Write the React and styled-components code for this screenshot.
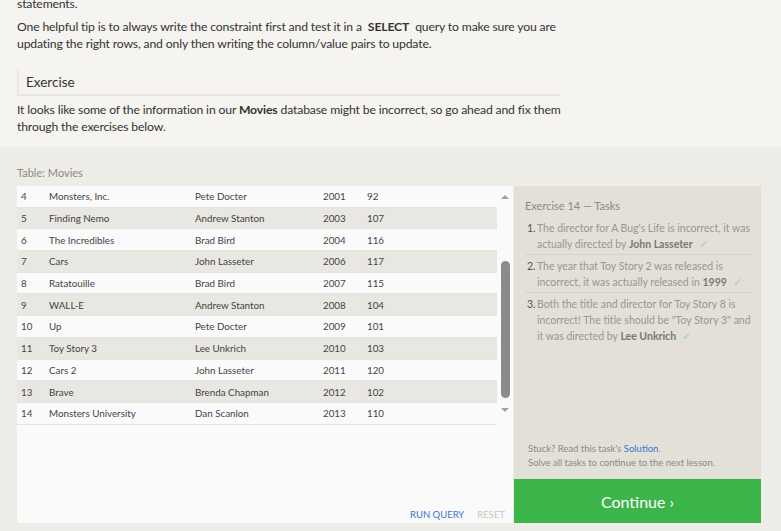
import React from 'react'
import styled, { createGlobalStyle } from 'styled-components'

const movies = [
  [4, 'Monsters, Inc.', 'Pete Docter', 2001, 92],
  [5, 'Finding Nemo', 'Andrew Stanton', 2003, 107],
  [6, 'The Incredibles', 'Brad Bird', 2004, 116],
  [7, 'Cars', 'John Lasseter', 2006, 117],
  [8, 'Ratatouille', 'Brad Bird', 2007, 115],
  [9, 'WALL-E', 'Andrew Stanton', 2008, 104],
  [10, 'Up', 'Pete Docter', 2009, 101],
  [11, 'Toy Story 3', 'Lee Unkrich', 2010, 103],
  [12, 'Cars 2', 'John Lasseter', 2011, 120],
  [13, 'Brave', 'Brenda Chapman', 2012, 102],
  [14, 'Monsters University', 'Dan Scanlon', 2013, 110],
]

const GlobalStyle = createGlobalStyle`
  html, body {
    margin: 0;
    padding: 0;
    background: #eeece6;
    font-family: Lato, "Open Sans", sans-serif;
    color: #333;
  }
`

const Page = styled.div`
  width: 781px;
  height: 531px;
  overflow: hidden;
`

const Lesson = styled.section`
  height: 147px;
  background: #f5f4f0;
  padding: 0 17px;
  box-sizing: border-box;
  overflow: hidden;
  font-size: 12.2px;
  letter-spacing: -0.15px;
  line-height: 17px;
`

const Para = styled.p`
  margin: 0 0 6px;
  &:first-child {
    margin-top: -5px;
  }
`

const Keyword = styled.b`
  padding: 0 3px;
`

const SectionHead = styled.h3`
  margin: 18px 0 5px;
  width: 543px;
  height: 26px;
  box-sizing: border-box;
  border-left: 2px solid #e9e7e0;
  border-bottom: 2px solid #e9e7e0;
  padding: 2px 0 0 7px;
  font-size: 13.5px;
  font-weight: normal;
  letter-spacing: 0;
  line-height: 20px;
  color: #333;
`

const Workspace = styled.section`
  padding: 18px 20px 0 17px;
`

const TableLabel = styled.div`
  font-size: 11px;
  color: #8c8a84;
  height: 21px;
  line-height: 16px;
`

const Body = styled.div`
  display: flex;
  height: 337px;
`

const Editor = styled.div`
  width: 496px;
  background: #fafafa;
  display: flex;
  flex-direction: column;
`

const Results = styled.div`
  display: flex;
  height: 238px;
`

const Rows = styled.div`
  flex: 1;
`

const Row = styled.div`
  display: grid;
  grid-template-columns: 28px 146px 128px 44px 1fr;
  height: 21.7px;
  align-items: center;
  padding-left: 4px;
  box-sizing: border-box;
  font-size: 9.8px;
  color: #444;
  background: ${p => (p.$shade ? '#e8e7e1' : '#fafafa')};
  border-bottom: 1px solid #e4e3dd;
`

const Scrollbar = styled.div`
  width: 16px;
  display: flex;
  flex-direction: column;
  align-items: center;
`

const Arrow = styled.div`
  width: 0;
  height: 0;
  border-left: 4px solid transparent;
  border-right: 4px solid transparent;
  ${p => (p.$down ? 'border-top: 4px solid #a3a3a3;' : 'border-bottom: 4px solid #a3a3a3;')}
  margin: ${p => (p.$down ? '0' : '9px 0 0')};
`

const Track = styled.div`
  flex: 1;
  width: 100%;
  display: flex;
  justify-content: center;
  padding: 62px 0 10px;
  box-sizing: border-box;
`

const Thumb = styled.div`
  width: 9px;
  height: 137px;
  border-radius: 5px;
  background: #8b8b8b;
`

const DownWrap = styled.div`
  height: 22px;
`

const Actions = styled.div`
  margin-top: auto;
  display: flex;
  justify-content: flex-end;
  gap: 13px;
  padding: 0 8px 3px 0;
  font-size: 9.5px;
`

const Action = styled.span`
  color: ${p => (p.$muted ? '#c9c8c4' : '#3d72d1')};
`

const Side = styled.aside`
  width: 247px;
  margin-left: 1px;
  display: flex;
  flex-direction: column;
`

const Tasks = styled.div`
  flex: 1;
  background: #e2e0d7;
  padding: 13px 9px 0 11px;
  display: flex;
  flex-direction: column;
`

const TasksTitle = styled.div`
  font-size: 11px;
  color: #8c8a84;
  margin-bottom: 5px;
`

const TaskList = styled.ol`
  margin: 0;
  padding: 0;
  list-style: none;
`

const Task = styled.li`
  display: flex;
  font-size: 10.5px;
  line-height: 16px;
  color: #999791;
  padding: 3px 0 2px 2px;
  border-bottom: ${p => (p.$last ? 'none' : '1px solid #d5d3ca')};
`

const Num = styled.span`
  color: #55534e;
  width: 10px;
  flex-shrink: 0;
`

const Strong = styled.b`
  color: #7a7873;
`

const Check = styled.span`
  color: #9fd49f;
  margin-left: 6px;
`

const Help = styled.div`
  margin-top: auto;
  font-size: 9.5px;
  line-height: 14px;
  color: #8c8a84;
  padding: 0 0 9px 3px;
`

const Link = styled.span`
  color: #3d72d1;
`

const Continue = styled.button`
  height: 44px;
  border: none;
  background: #3bb54a;
  color: #fff;
  font-family: inherit;
  font-size: 16px;
  padding: 0;
`

export default function App() {
  return (
    <Page>
      <GlobalStyle />
      <Lesson>
        <Para>statements.</Para>
        <Para>
          One helpful tip is to always write the constraint first and test it in a <Keyword>SELECT</Keyword> query to make
          sure you are
          <br />
          updating the right rows, and only then writing the column/value pairs to update.
        </Para>
        <SectionHead>Exercise</SectionHead>
        <Para>
          It looks like some of the information in our <b>Movies</b> database might be incorrect, so go ahead and fix them
          <br />
          through the exercises below.
        </Para>
      </Lesson>
      <Workspace>
        <TableLabel>Table: Movies</TableLabel>
        <Body>
          <Editor>
            <Results>
              <Rows>
                {movies.map((m, i) => (
                  <Row key={m[0]} $shade={i % 2 === 1}>
                    {m.map((c, j) => (
                      <span key={j}>{c}</span>
                    ))}
                  </Row>
                ))}
              </Rows>
              <Scrollbar>
                <Arrow />
                <Track>
                  <Thumb />
                </Track>
                <DownWrap>
                  <Arrow $down />
                </DownWrap>
              </Scrollbar>
            </Results>
            <Actions>
              <Action>RUN QUERY</Action>
              <Action $muted>RESET</Action>
            </Actions>
          </Editor>
          <Side>
            <Tasks>
              <TasksTitle>Exercise 14 — Tasks</TasksTitle>
              <TaskList>
                <Task>
                  <Num>1.</Num>
                  <span>
                    The director for A Bug's Life is incorrect, it was actually directed by <Strong>John Lasseter</Strong>
                    <Check>✓</Check>
                  </span>
                </Task>
                <Task>
                  <Num>2.</Num>
                  <span>
                    The year that Toy Story 2 was released is incorrect, it was actually released in <Strong>1999</Strong>
                    <Check>✓</Check>
                  </span>
                </Task>
                <Task $last>
                  <Num>3.</Num>
                  <span>
                    Both the title and director for Toy Story 8 is incorrect! The title should be "Toy Story 3" and it was
                    directed by <Strong>Lee Unkrich</Strong>
                    <Check>✓</Check>
                  </span>
                </Task>
              </TaskList>
              <Help>
                Stuck? Read this task's <Link>Solution</Link>.
                <br />
                Solve all tasks to continue to the next lesson.
              </Help>
            </Tasks>
            <Continue>Continue ›</Continue>
          </Side>
        </Body>
      </Workspace>
    </Page>
  )
}
